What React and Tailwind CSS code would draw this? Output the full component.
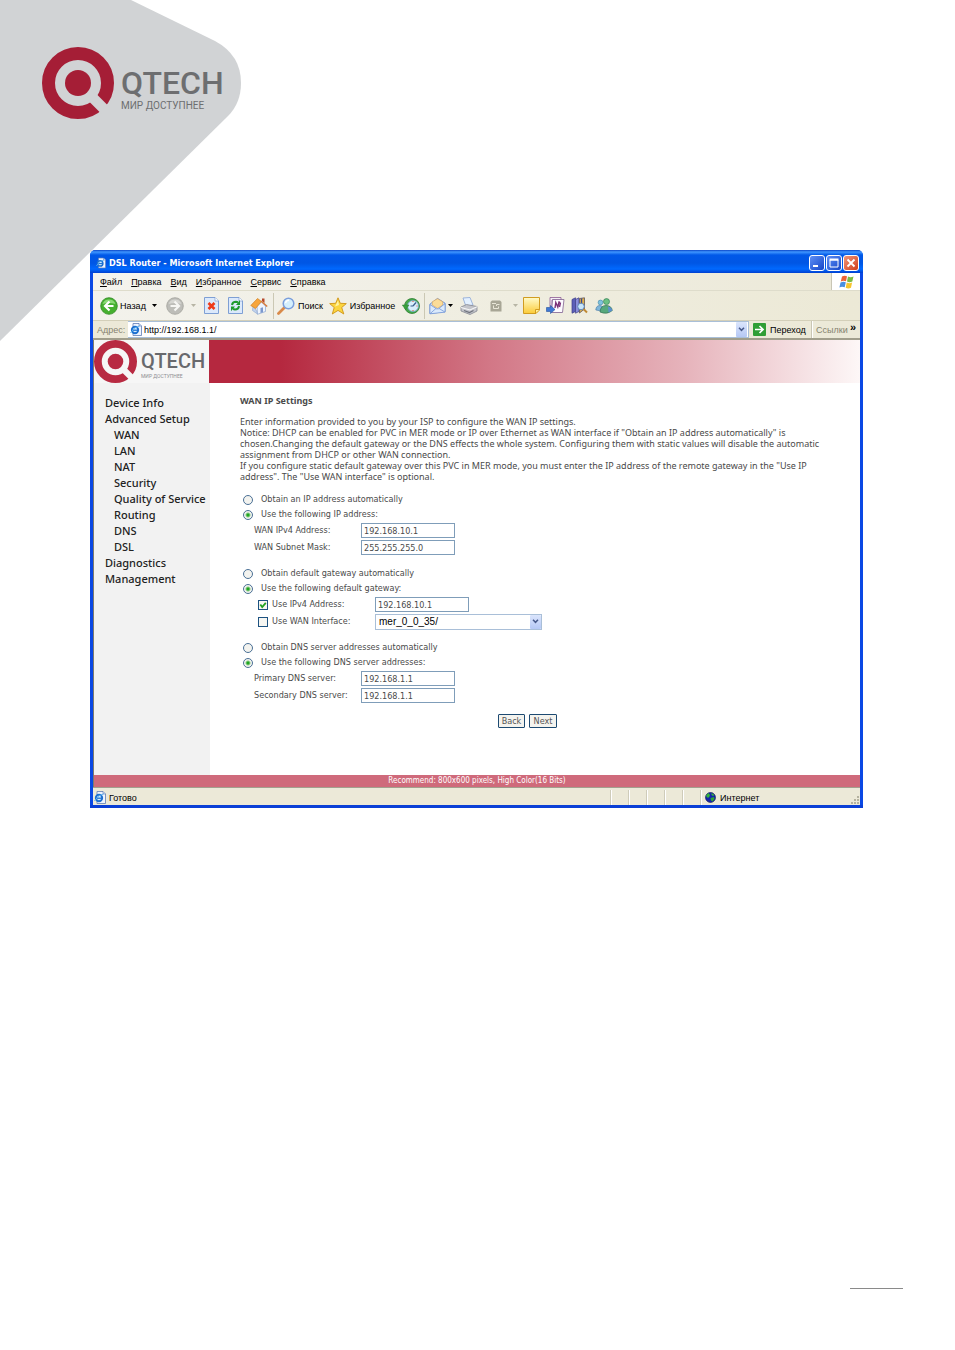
import React from 'react';

const UI = 'font-["DejaVu_Sans_Condensed","DejaVu_Sans",sans-serif]';
const CHROME = 'font-["Liberation_Sans",sans-serif] text-[9px] leading-[12px] text-black';

function QMark({ className, red, ground }) {
  return (
    <svg viewBox="0 0 72 72" className={className} aria-hidden="true">
      <circle cx="36" cy="36" r="29.5" fill="none" stroke={red} strokeWidth="13" />
      <circle cx="36" cy="36" r="13" fill={red} />
      <path d="M49 49L63 63" stroke={ground} strokeWidth="10.500" />
    </svg>
  );
}

function CornerShape() {
  return (
    <svg viewBox="0 0 250 350" className="absolute top-0 left-0 w-[250px] h-[350px]" aria-hidden="true">
      <path d="M0 0H131L215 41Q241 55 241 83Q241 103 228 116L0 341Z" fill="#d1d3d5" />
    </svg>
  );
}

function PageIcon({ className }) {
  return (
    <svg viewBox="0 0 12 13" className={className} aria-hidden="true">
      <path d="M3 .5H9L11.500 3V12.500H3Z" fill="#eef4ff" stroke="#5f7cb4" strokeWidth=".8" />
      <path d="M9 .5V3H11.500" fill="#cfdcf2" stroke="#5f7cb4" strokeWidth=".6" />
      <circle cx="5" cy="7" r="3.200" fill="#d5ecfb" stroke="#1c6fd0" strokeWidth="1.900" />
      <path d="M2.500 7.200H8" stroke="#1c6fd0" strokeWidth="1.300" />
      <path d="M.5 10Q4 3.500 9.500 3" fill="none" stroke="#58b0ee" strokeWidth="1" />
    </svg>
  );
}

function BackIcon() {
  return (
    <svg viewBox="0 0 18 18" className="w-[18px] h-[18px] shrink-0" aria-hidden="true">
      <circle cx="9" cy="9" r="8.300" fill="#46b030" stroke="#2f8a22" strokeWidth=".8" />
      <path d="M2.500 7A7 7 0 0 1 15.500 7Q9 5 2.500 7Z" fill="#8bd977" />
      <path d="M9.500 4.500L5 9L9.500 13.500M5.500 9H13.500" fill="none" stroke="#fff" strokeWidth="2.200" />
    </svg>
  );
}

function ForwardIcon() {
  return (
    <svg viewBox="0 0 18 18" className="w-[18px] h-[18px] shrink-0" aria-hidden="true">
      <circle cx="9" cy="9" r="8.300" fill="#bdbdb8" stroke="#a2a29c" strokeWidth=".8" />
      <path d="M2.500 7A7 7 0 0 1 15.500 7Q9 5 2.500 7Z" fill="#d6d6d2" />
      <path d="M8.500 4.500L13 9L8.500 13.500M12.500 9H4.500" fill="none" stroke="#f6f6f3" strokeWidth="2.200" />
    </svg>
  );
}

function Sheet({ children }) {
  return (
    <svg viewBox="0 0 15 17" className="w-[15px] h-[17px]" aria-hidden="true">
      <path d="M.5 .5H11L14.500 4V16.500H.5Z" fill="#dce9fb" stroke="#7e9fd4" />
      <path d="M11 .5V4H14.500" fill="#fff" stroke="#7e9fd4" strokeWidth=".7" />
      {children}
    </svg>
  );
}

function StopIcon() {
  return (
    <Sheet>
      <path d="M4.500 6L10.500 12M10.500 6L4.500 12" stroke="#ee3a1a" strokeWidth="2.600" />
    </Sheet>
  );
}

function RefreshIcon() {
  return (
    <Sheet>
      <path d="M4 8Q4.500 4.800 8 4.800L10 5.300" fill="none" stroke="#1e9a2c" strokeWidth="2" />
      <path d="M8 8H12V3Z" fill="#1e9a2c" />
      <path d="M11 9Q10.500 12.500 7 12.500L5 12" fill="none" stroke="#1e9a2c" strokeWidth="2" />
      <path d="M7 9.500H3V14.300Z" fill="#1e9a2c" />
    </Sheet>
  );
}

function HomeIcon() {
  return (
    <svg viewBox="0 0 18 18" className="w-[18px] h-[18px]" aria-hidden="true">
      <path d="M3 9L7 14.500L7.500 17L2.500 13.500Z" fill="#c2d3ee" stroke="#8aa4cf" strokeWidth=".6" />
      <path d="M7 9L11.500 5L15.500 9V14.500L7.500 17.300Z" fill="#eef4fd" stroke="#8aa4cf" strokeWidth=".7" />
      <path d="M12 1.500H14.500V6L12 4Z" fill="#b5492b" />
      <path d="M.8 8.500L7.500 1.500L11.500 4.500L5.500 11.500Z" fill="#f7a53a" stroke="#d07f22" strokeWidth=".7" />
      <path d="M11 4L17.200 9.500" stroke="#d5793a" strokeWidth="1.500" />
      <path d="M10.500 11L13 10.300V15.200L10.500 16Z" fill="#7b98cd" />
    </svg>
  );
}

function SearchIcon() {
  return (
    <svg viewBox="0 0 18 18" className="w-[18px] h-[18px] shrink-0" aria-hidden="true">
      <path d="M7.500 10.500L1.500 16.500" stroke="#d98a4a" strokeWidth="2.800" strokeLinecap="round" />
      <circle cx="11.500" cy="6.500" r="5.300" fill="#d5effc" stroke="#7b9fdc" strokeWidth="1.500" />
      <path d="M8.500 6Q9 3.500 12 3.300" fill="none" stroke="#fff" strokeWidth="1.400" />
    </svg>
  );
}

function StarIcon() {
  return (
    <svg viewBox="0 0 18 18" className="w-[18px] h-[18px] shrink-0" aria-hidden="true">
      <path
        d="M9 .8L11.300 6.300L17.300 6.600L12.700 10.500L14.800 17L9 13.400L3.300 17L5.200 10.500L.7 6.600L6.700 6.300Z"
        fill="#fbd53f"
        stroke="#cf9416"
        strokeWidth=".9"
      />
      <path d="M9 3.500L10 8L6 9.500L7.200 7.200Z" fill="#fff3a8" />
    </svg>
  );
}

function HistoryIcon() {
  return (
    <svg viewBox="0 0 18 18" className="w-[18px] h-[18px]" aria-hidden="true">
      <circle cx="10" cy="9" r="7.500" fill="#46a84a" stroke="#2d7f35" strokeWidth=".8" />
      <circle cx="11" cy="9" r="5.500" fill="#d8eefb" stroke="#6da0c4" strokeWidth=".8" />
      <path d="M11 9L14 5.500M11 9H8.500" stroke="#3b5f8f" strokeWidth="1.200" />
      <path d="M11 4V5M11 13V14M15.500 9H14.500" stroke="#e05030" strokeWidth="1" />
      <path d="M.3 8H7L3.700 12.800Z" fill="#3aa23e" stroke="#2d7f35" strokeWidth=".5" />
    </svg>
  );
}

function MailIcon() {
  return (
    <svg viewBox="0 0 18 18" className="w-[17px] h-[18px]" aria-hidden="true">
      <path d="M1 7L9 1L17 6V15L1 17Z" fill="#cfe2fa" stroke="#6f93d4" />
      <path d="M3.500 8V4.500L9 1.200L14.500 4.500V8L9 11.500Z" fill="#fbdc98" stroke="#dca65a" strokeWidth=".7" />
      <path d="M1 7.500L8 12H10L17 6.500V15.500L1 17.300Z" fill="#dbeafc" stroke="#6f93d4" strokeWidth=".8" />
      <path d="M1.300 17L7.500 11.500M16.700 15.300L10.500 11.500" stroke="#6f93d4" strokeWidth=".8" />
    </svg>
  );
}

function PrintIcon() {
  return (
    <svg viewBox="0 0 18 18" className="w-[18px] h-[18px]" aria-hidden="true">
      <path d="M3 1L10 .5L13 8L6 9.500Z" fill="#e3f0ff" stroke="#8aa6d6" strokeWidth=".8" />
      <path d="M1 10L6.500 7.500L17 9.500V14L10 17.500L1 14Z" fill="#c3c4ca" stroke="#858892" strokeWidth=".8" />
      <path d="M1 10.500L10 13L17 9.800" fill="none" stroke="#f7f7f7" strokeWidth="1.100" />
      <path d="M4 13.500L9.500 15.500L13.500 13.500" fill="none" stroke="#6e727c" strokeWidth="1.300" />
    </svg>
  );
}

function EditIcon() {
  return (
    <svg viewBox="0 0 12 12" className="w-[12px] h-[12px]" aria-hidden="true">
      <path d="M2 .5H10L11.500 2V11.500H.5V2Z" fill="#a8a696" />
      <path d="M2 3.500H6M9.500 4.500H6.500V6M3.500 5.500V8.500H8.500V6.500" fill="none" stroke="#e9e6d8" strokeWidth="1" />
    </svg>
  );
}

function NoteIcon() {
  return (
    <svg viewBox="0 0 17 17" className="w-[17px] h-[17px]" aria-hidden="true">
      <defs>
        <linearGradient id="note" x1="0" y1="0" x2="0" y2="1">
          <stop offset="0" stopColor="#fffbc9" />
          <stop offset="1" stopColor="#fbcb38" />
        </linearGradient>
      </defs>
      <path d="M.5 .5H16.500V13L13 16.500H.5Z" fill="url(#note)" stroke="#d19c20" />
      <path d="M12.500 16V12.500H16.500" fill="#fff0a0" stroke="#d19c20" />
    </svg>
  );
}

function OneNoteIcon() {
  return (
    <svg viewBox="0 0 19 17" className="w-[19px] h-[17px]" aria-hidden="true">
      <path d="M4 .5H15V3H6V10H4Z" fill="#f5eef6" stroke="#8b5b93" strokeWidth=".8" />
      <path d="M6.500 2.500H18L16.500 15.500H5.500Z" fill="#fdfbff" stroke="#8b6f9a" strokeWidth=".9" />
      <path d="M9 11L9.800 5.500L11.800 10L13 5L14 5.500M13.500 10L14.500 5.500" fill="none" stroke="#7a2f76" strokeWidth="1.400" />
      <path d="M.5 10.500H4.500V8.500L9 12.500L4.500 16.500V14.500H.5Z" fill="#3f77d4" stroke="#24509c" strokeWidth=".6" />
    </svg>
  );
}

function ResearchIcon() {
  return (
    <svg viewBox="0 0 17 17" className="w-[17px] h-[17px]" aria-hidden="true">
      <path d="M1 2.500L4.500 .8V14.500L1 16.200Z" fill="#5d5fb8" stroke="#3c3d86" strokeWidth=".7" />
      <path d="M4.500 2.500L8 .8V14.500L4.500 16.200Z" fill="#8b8fdb" stroke="#3c3d86" strokeWidth=".7" />
      <path d="M8.500 1.500L13.500 .8V12L8.500 16Z" fill="#e1b24b" stroke="#5b5462" strokeWidth=".8" />
      <path d="M10.500 1.500V6" stroke="#3e4a8a" strokeWidth="1.400" />
      <circle cx="10" cy="9.500" r="3.300" fill="#c8e6fb" stroke="#5f86b8" />
      <path d="M12.500 12L16 15.500" stroke="#c08a35" strokeWidth="2" />
    </svg>
  );
}

function MessengerIcon() {
  return (
    <svg viewBox="0 0 18 16" className="w-[18px] h-[16px]" aria-hidden="true">
      <circle cx="5.500" cy="4.500" r="2.400" fill="#7ec3dd" stroke="#3f83a8" strokeWidth=".6" />
      <path d="M.8 12Q1 7.500 5 7.500Q8 7.500 8.500 11L6 13Z" fill="#7fb6da" stroke="#4579a6" strokeWidth=".6" />
      <circle cx="11.500" cy="3.600" r="3" fill="#6cc083" stroke="#327e54" strokeWidth=".7" />
      <path d="M5 14Q5.500 7.500 11 7.500Q16.500 7.500 17.300 12.500Q12 17 5 14Z" fill="#57a87c" stroke="#2f7052" strokeWidth=".7" />
      <path d="M13 8.500Q16.500 9 17.300 12.500L13.500 14.500Z" fill="#5b8fd0" />
    </svg>
  );
}

function WindowsFlag() {
  return (
    <svg viewBox="0 0 15 14" className="w-[15px] h-[14px]" aria-hidden="true">
      <path d="M3 1.500Q5.500 0 8 1.200L7 6.200Q4.500 5 1.800 6.400Z" fill="#ee6236" />
      <path d="M9 1.600Q11.500 2.800 14.500 1.600L13.300 6.600Q10.500 7.800 8 6.600Z" fill="#7cbb42" />
      <path d="M1.500 7.400Q4.500 6 6.800 7.200L5.700 12.300Q3 11 .4 12.400Z" fill="#4a8fe0" />
      <path d="M7.700 7.600Q10.500 8.800 13.100 7.600L12 12.800Q9 14 6.700 12.700Z" fill="#f6c52e" />
    </svg>
  );
}

function GlobeIcon() {
  return (
    <svg viewBox="0 0 11 11" className="w-[11px] h-[11px]" aria-hidden="true">
      <circle cx="5.500" cy="5.500" r="5" fill="#1626a8" stroke="#0a0f55" strokeWidth=".6" />
      <path d="M1 3.500L3.500 1L5 3L4 5.500L2 5.500Z" fill="#35b53a" />
      <path d="M6.500 1L9.500 3L8 4L6.500 3Z" fill="#35b53a" />
      <path d="M5.500 6L9 5L9.500 7L7.500 9.500L6 8.500Z" fill="#2ea336" />
    </svg>
  );
}

function Caret({ faded }) {
  return (
    <svg viewBox="0 0 5 3" className="w-[5px] h-[3px]" aria-hidden="true">
      <path d="M0 0H5L2.500 3Z" fill={faded ? '#b7b5a5' : '#000'} />
    </svg>
  );
}

function Chevron() {
  return (
    <span className="flex w-[11px] self-stretch items-center justify-center rounded-[1px] bg-gradient-to-b from-[#dbe5fc] to-[#b5c8f5]">
      <svg viewBox="0 0 8 6" className="w-[7px] h-[5px]" aria-hidden="true">
        <path d="M1 1L4 4L7 1" fill="none" stroke="#46598a" strokeWidth="1.800" />
      </svg>
    </span>
  );
}

function TitleBar() {
  const button =
    'flex w-[16px] h-[16px] items-center justify-center rounded-[3px] border border-white';
  return (
    <header className="flex h-[23px] items-center gap-[3px] rounded-t-[5px] bg-[linear-gradient(to_bottom,#0a45c8_0,#3f96ff_2px,#0058e8_5px,#0056e4_13px,#0069ff_19px,#003fd0_23px)] pl-[6px] pr-[4px] pt-[3px]">
      <PageIcon className="w-[10px] h-[12px]" />
      <h1 className={`flex-1 truncate ${UI} text-[9px] leading-[12px] font-bold text-white`}>
        DSL Router - Microsoft Internet Explorer
      </h1>
      <div className="flex gap-[1px]">
        <button aria-label="Свернуть" className={`${button} bg-gradient-to-br from-[#5f8ff5] to-[#1545c8]`}>
          <svg viewBox="0 0 10 10" className="w-[10px] h-[10px]"><path d="M1 8H6" stroke="#fff" strokeWidth="2" /></svg>
        </button>
        <button aria-label="Развернуть" className={`${button} bg-gradient-to-br from-[#5f8ff5] to-[#1545c8]`}>
          <svg viewBox="0 0 10 10" className="w-[10px] h-[10px]">
            <path d="M1 2H9V9H1Z" fill="none" stroke="#fff" strokeWidth="1" />
            <path d="M.5 1.500H9.500" stroke="#fff" strokeWidth="2" />
          </svg>
        </button>
        <button aria-label="Закрыть" className={`${button} bg-gradient-to-br from-[#ee9478] to-[#cf3a12]`}>
          <svg viewBox="0 0 10 10" className="w-[10px] h-[10px]"><path d="M1.500 1.500L8.500 8.500M8.500 1.500L1.500 8.500" stroke="#fff" strokeWidth="1.800" /></svg>
        </button>
      </div>
    </header>
  );
}

const MENUS = ['Файл', 'Правка', 'Вид', 'Избранное', 'Сервис', 'Справка'];

function MenuBar() {
  return (
    <div className={`flex h-[18px] items-stretch border-b border-[#dedccb] bg-gradient-to-r from-[#f4f3ee] to-[#ece9d8] ${CHROME}`}>
      <nav className="flex flex-1 items-center gap-[9px] pl-[7px]">
        {MENUS.map((m) => (
          <button key={m}>
            <span className="underline">{m[0]}</span>
            {m.slice(1)}
          </button>
        ))}
      </nav>
      <div className="flex w-[29px] items-center justify-center border-l border-[#c9c6b5] bg-white">
        <WindowsFlag />
      </div>
    </div>
  );
}

function Divider() {
  return <span className="h-[26px] w-px shrink-0 bg-[#cbc8b4]" />;
}

function Toolbar() {
  const btn = 'flex h-[24px] items-center justify-center';
  return (
    <div className={`flex h-[30px] items-center border-b border-[#d3cfb9] bg-gradient-to-r from-[#f3f2ec] to-[#ece9d6] pl-[7px] ${CHROME}`}>
      <button className={`${btn} w-[46px] gap-[2px]`}><BackIcon />Назад</button>
      <button aria-label="История назад" className={`${btn} w-[17px]`}><Caret /></button>
      <button aria-label="Вперед" className={`${btn} w-[24px]`}><ForwardIcon /></button>
      <button aria-label="История вперед" className={`${btn} w-[12px]`}><Caret faded /></button>
      <button aria-label="Остановить" className={`${btn} w-[24px]`}><StopIcon /></button>
      <button aria-label="Обновить" className={`${btn} w-[24px]`}><RefreshIcon /></button>
      <button aria-label="Домой" className={`${btn} w-[24px]`}><HomeIcon /></button>
      <span className="w-[2px]" />
      <Divider />
      <button className={`${btn} w-[52px] gap-[3px]`}><SearchIcon />Поиск</button>
      <button className={`${btn} w-[72px] gap-[3px]`}><StarIcon />Избранное</button>
      <button aria-label="Журнал" className={`${btn} w-[26px]`}><HistoryIcon /></button>
      <Divider />
      <button aria-label="Почта" className={`${btn} w-[32px] gap-[2px]`}><MailIcon /><Caret /></button>
      <button aria-label="Печать" className={`${btn} w-[24px]`}><PrintIcon /></button>
      <button aria-label="Правка" className={`${btn} w-[30px]`}><EditIcon /></button>
      <button aria-label="Редакторы" className={`${btn} w-[8px]`}><Caret faded /></button>
      <button aria-label="Заметка" className={`${btn} w-[24px]`}><NoteIcon /></button>
      <button aria-label="OneNote" className={`${btn} w-[24px]`}><OneNoteIcon /></button>
      <button aria-label="Справочники" className={`${btn} w-[24px]`}><ResearchIcon /></button>
      <button aria-label="Messenger" className={`${btn} w-[26px]`}><MessengerIcon /></button>
    </div>
  );
}

function AddressBar() {
  return (
    <div className={`flex h-[19px] items-stretch border-b-2 border-[#a19e8c] bg-[#ece9d8] ${CHROME}`}>
      <label htmlFor="address" className="flex w-[35px] items-center pl-[4px] text-[#85826f]">Адрес:</label>
      <div className="flex flex-1 items-center gap-[2px] border-y border-r border-[#a9bfd8] bg-white pl-[2px] pr-px">
        <PageIcon className="w-[12px] h-[13px]" />
        <input id="address" defaultValue="http://192.168.1.1/" className="min-w-0 flex-1 bg-transparent p-0 outline-none" />
        <Chevron />
      </div>
      <button className="flex w-[63px] items-center gap-[4px] border-r border-[#c9c6b5] pl-[4px]">
        <svg viewBox="0 0 13 13" className="w-[13px] h-[13px]" aria-hidden="true">
          <rect width="13" height="13" rx="1" fill="#2f9e35" />
          <path d="M2 6.500H10M6.500 3L10 6.500L6.500 10" fill="none" stroke="#fff" strokeWidth="1.700" />
        </svg>
        Переход
      </button>
      <button className="flex w-[34px] items-center border-l border-white pl-[3px] text-[#85826f]">Ссылки</button>
      <button aria-label="Другие ссылки" className="w-[14px] pb-[6px] text-[11px] font-bold">»</button>
    </div>
  );
}

function Banner() {
  return (
    <div className="flex h-[43px]">
      <div className="flex w-[115px] shrink-0 items-center gap-[4px] bg-[#f6f6f6]">
        <QMark className="h-[43px] w-[43px] shrink-0" red="#b82a42" ground="#f6f6f6" />
        <div className='flex flex-col pt-[4px] font-["Roboto",sans-serif]'>
          <span className="text-[20px] leading-[24px] font-medium text-[#68696d]">QTECH</span>
          <span className="text-[5px] leading-[6px] whitespace-nowrap text-[#8d8e92]">МИР ДОСТУПНЕЕ</span>
        </div>
      </div>
      <div className="flex-1 bg-[linear-gradient(to_right,#b5283f_0%,#b5283f_11%,#d27786_43%,#e6b3bb_73%,#fdf7f7_100%)]" />
    </div>
  );
}

const NAV = [
  ['Device Info', 0],
  ['Advanced Setup', 0],
  ['WAN', 1],
  ['LAN', 1],
  ['NAT', 1],
  ['Security', 1],
  ['Quality of Service', 1],
  ['Routing', 1],
  ['DNS', 1],
  ['DSL', 1],
  ['Diagnostics', 0],
  ['Management', 0],
];

function Sidebar() {
  return (
    <nav className="w-[116px] shrink-0 bg-[#f2f2f2] pt-[12px] pl-[11px]">
      <ul className='font-["Noto_Sans",sans-serif] text-[11px] leading-[16px] font-medium whitespace-nowrap text-[#222]'>
        {NAV.map(([name, level]) => (
          <li key={name} className={level ? 'pl-[9px]' : ''}>
            <a href="#">{name}</a>
          </li>
        ))}
      </ul>
    </nav>
  );
}

function Radio({ name, label, checked }) {
  return (
    <label className="flex h-[15px] items-center gap-[8px] pl-[3px]">
      <input
        type="radio"
        name={name}
        defaultChecked={checked}
        className="h-[10px] w-[10px] appearance-none rounded-full border border-[#4a7096] bg-[#f3f3ef] checked:bg-[radial-gradient(circle,#22a622_0,#22a622_1px,#f3f3ef_3px)]"
      />
      {label}
    </label>
  );
}

const BOX = 'h-[15px] w-[94px] border border-[#7f9db9] bg-white px-[2px] text-[9px] leading-[13px] text-[#4a4a4a] outline-none';

function Field({ id, label, value }) {
  return (
    <div className="flex h-[17px] items-center pl-[14px]">
      <label htmlFor={id} className="w-[107px]">{label}</label>
      <input id={id} defaultValue={value} className={BOX} />
    </div>
  );
}

function CheckRow({ id, label, checked, children }) {
  return (
    <div className="flex h-[17px] items-center pl-[18px]">
      <span className="mr-[4px] grid h-[10px] w-[10px]">
        <input
          id={id}
          type="checkbox"
          defaultChecked={checked}
          className="peer col-start-1 row-start-1 h-[10px] w-[10px] appearance-none border border-[#1d5281] bg-[#f6f6f2]"
        />
        <svg viewBox="0 0 10 10" className="pointer-events-none invisible col-start-1 row-start-1 h-[10px] w-[10px] peer-checked:visible" aria-hidden="true">
          <path d="M2.300 4.500L4.200 7L7.800 2.800" fill="none" stroke="#21a121" strokeWidth="1.800" />
        </svg>
      </span>
      <label htmlFor={id} className="w-[103px]">{label}</label>
      {children}
    </div>
  );
}

function Settings() {
  const btn = 'h-[14px] rounded-[1px] border border-[#1d4a72] bg-[#f4f3ee] text-center text-[#555]';
  return (
    <main className="flex-1 overflow-hidden pl-[30px] pt-[12px] pb-[47px] text-[9px] leading-[11px] whitespace-nowrap text-[#4a4a4a]">
      <h2 className='font-["Noto_Sans",sans-serif] font-bold'>WAN IP Settings</h2>
      <p className='pt-[10px] font-["Noto_Sans",sans-serif]'>
        Enter information provided to you by your ISP to configure the WAN IP settings.
        <br />
        Notice: DHCP can be enabled for PVC in MER mode or IP over Ethernet as WAN interface if "Obtain an IP address automatically" is
        <br />
        chosen.Changing the default gateway or the DNS effects the whole system. Configuring them with static values will disable the automatic
        <br />
        assignment from DHCP or other WAN connection.
        <br />
        If you configure static default gateway over this PVC in MER mode, you must enter the IP address of the remote gateway in the "Use IP
        <br />
        address". The "Use WAN interface" is optional.
      </p>
      <form className="flex flex-col gap-[10px] pt-[10px]" onSubmit={(e) => e.preventDefault()}>
        <div>
          <Radio name="ip" label="Obtain an IP address automatically" />
          <Radio name="ip" label="Use the following IP address:" checked />
          <Field id="wan-ip" label="WAN IPv4 Address:" value="192.168.10.1" />
          <Field id="wan-mask" label="WAN Subnet Mask:" value="255.255.255.0" />
        </div>
        <div>
          <Radio name="gw" label="Obtain default gateway automatically" />
          <Radio name="gw" label="Use the following default gateway:" checked />
          <CheckRow id="use-ip" label="Use IPv4 Address:" checked>
            <input aria-label="Gateway IPv4 address" defaultValue="192.168.10.1" className={BOX} />
          </CheckRow>
          <CheckRow id="use-wan" label="Use WAN Interface:">
            <span className="grid h-[16px] w-[167px] border border-[#a9bfd8] bg-white">
              <select
                aria-label="WAN interface"
                className='col-start-1 row-start-1 appearance-none bg-transparent px-[3px] font-["Liberation_Sans",sans-serif] text-[10px] leading-[14px] text-black outline-none'
              >
                <option>mer_0_0_35/</option>
              </select>
              <span className="pointer-events-none col-start-1 row-start-1 flex justify-self-end">
                <Chevron />
              </span>
            </span>
          </CheckRow>
        </div>
        <div>
          <Radio name="dns" label="Obtain DNS server addresses automatically" />
          <Radio name="dns" label="Use the following DNS server addresses:" checked />
          <Field id="dns1" label="Primary DNS server:" value="192.168.1.1" />
          <Field id="dns2" label="Secondary DNS server:" value="192.168.1.1" />
        </div>
        <div className="flex gap-[4px] pl-[258px]">
          <button type="button" className={`${btn} w-[27px]`}>Back</button>
          <button type="submit" className={`${btn} w-[28px]`}>Next</button>
        </div>
      </form>
    </main>
  );
}

function StatusBar() {
  const pane = 'w-[18px] border-l border-white shadow-[-1px_0_0_#cfccba]';
  return (
    <footer className={`flex h-[18px] items-stretch border-t border-[#a3a08e] bg-[#ece9d8] pt-[2px] ${CHROME}`}>
      <div className="flex flex-1 items-center gap-[3px] pl-[1px]">
        <PageIcon className="w-[12px] h-[13px]" />
        Готово
      </div>
      <div className={pane} />
      <div className={pane} />
      <div className={pane} />
      <div className={pane} />
      <div className={pane} />
      <div className="flex w-[159px] items-center gap-[4px] border-l border-white pl-[3px] shadow-[-1px_0_0_#cfccba]">
        <GlobeIcon />
        <span className="flex-1">Интернет</span>
        <svg viewBox="0 0 9 9" className="h-[9px] w-[9px] self-end" aria-hidden="true">
          <path d="M6 0H8V2H6ZM3 3H5V5H3ZM6 3H8V5H6ZM0 6H2V8H0ZM3 6H5V8H3ZM6 6H8V8H6Z" fill="#b5b29f" />
        </svg>
      </div>
    </footer>
  );
}

function BrowserWindow() {
  return (
    <section className={`rounded-t-[6px] border-b-[3px] border-[#0a3fd6] bg-[#0a48e4] ${UI}`}>
      <TitleBar />
      <div className="border-x-[3px] border-[#0a48e4]">
        <MenuBar />
        <Toolbar />
        <AddressBar />
        <div className="border-l border-[#7d7b6e] bg-white">
          <Banner />
          <div className="flex">
            <Sidebar />
            <Settings />
          </div>
          <div className="h-[12px] bg-[#cf6a7b] text-center text-[8px] leading-[12px] text-white">
            Recommend: 800x600 pixels, High Color(16 Bits)
          </div>
        </div>
        <StatusBar />
      </div>
    </section>
  );
}

export default function App() {
  return (
    <div className="relative flex min-h-screen flex-col bg-white">
      <CornerShape />
      <div className="relative flex h-[250px] items-start gap-[7px] pt-[47px] pl-[42px]">
        <QMark className="h-[72px] w-[72px]" red="#a51e36" ground="#d1d3d5" />
        <div className='flex flex-col pt-[18px] font-["Roboto",sans-serif]'>
          <span className="text-[32px] leading-[36px] font-medium text-[#6d6e70]">QTECH</span>
          <span className="text-[10px] leading-[10px] text-[#6d6e70]">МИР ДОСТУПНЕЕ</span>
        </div>
      </div>
      <div className="relative pr-[92px] pl-[90px]">
        <BrowserWindow />
      </div>
      <div className="mt-auto flex justify-end pr-[52px] pb-[61px]">
        <hr className="w-[53px] border-t border-[#8a8a8a]" />
      </div>
    </div>
  );
}
